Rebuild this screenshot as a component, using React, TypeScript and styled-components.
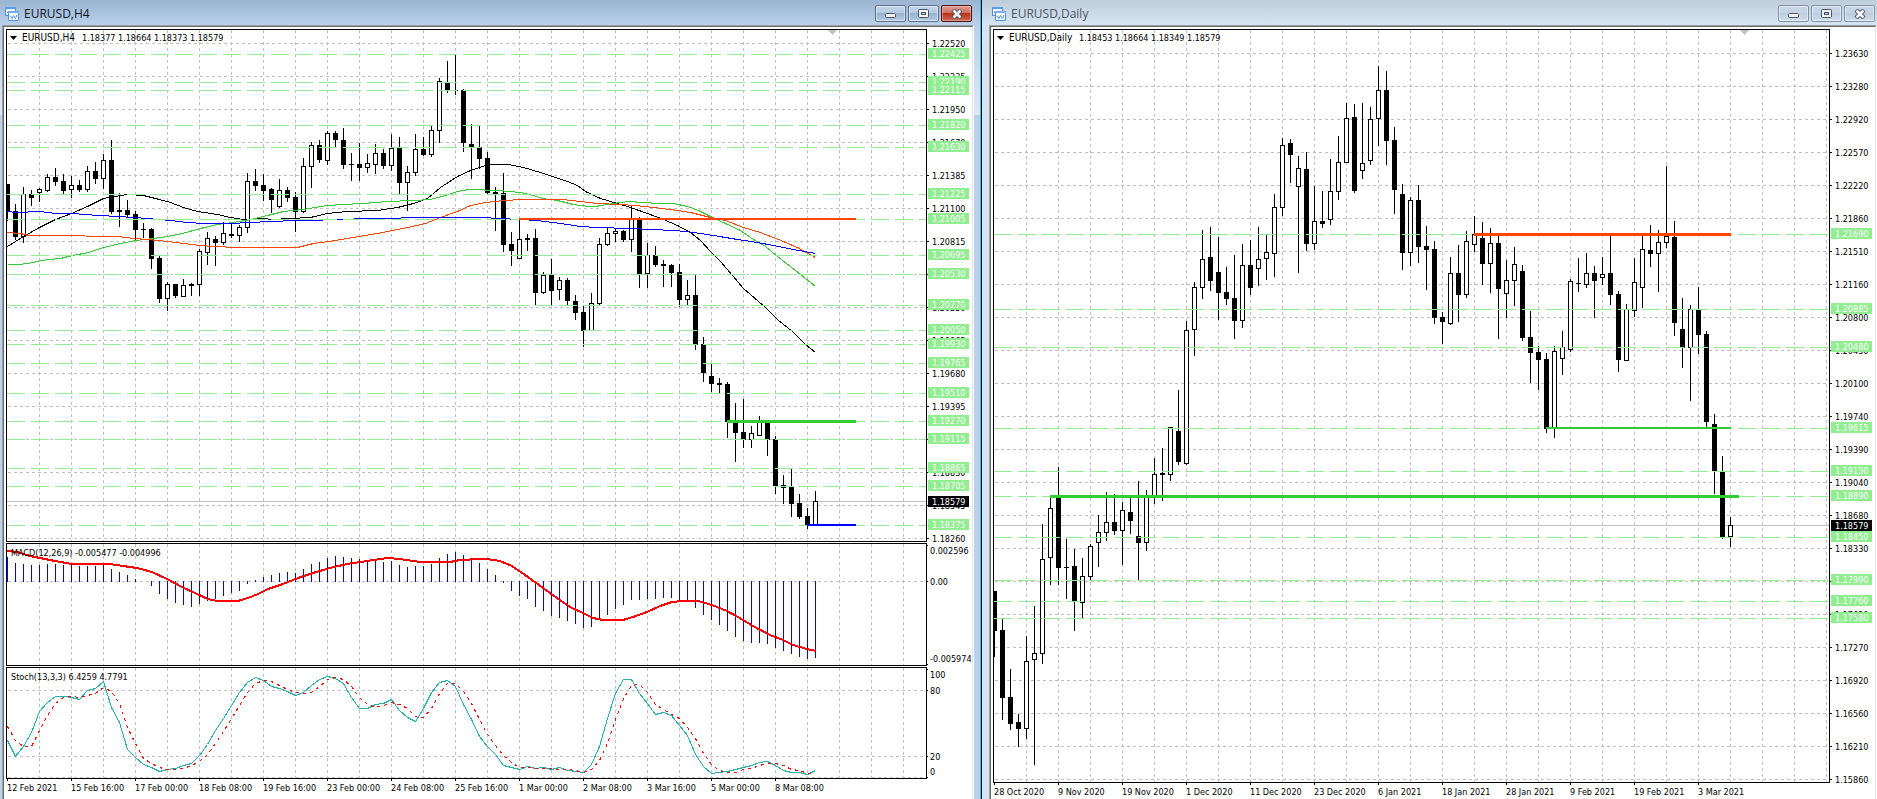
import React from "react";
import styled, { createGlobalStyle } from "styled-components";

const GlobalStyle = createGlobalStyle`
  * { box-sizing: border-box; }
  body { margin: 0; background: #ffffff; }
`;

const INK = "#000000";
const GRID = "#c0c0c0";
const LEVEL = "#90ee90";
const CHART_FONT = '"DejaVu Sans Condensed", "DejaVu Sans", sans-serif';
const BAR_STEP = 8;

/* ---------- window chrome ---------- */

const Workspace = styled.main`
  display: grid;
  grid-template-columns: minmax(0, 982fr) minmax(0, 895fr);
  min-height: 100vh;
`;

const ChartWindow = styled.section<{ $active: boolean }>`
  display: flex;
  flex-direction: column;
  min-width: 0;
  padding: ${(p) => (p.$active ? "0 7px 0 2px" : "0 0 0 7px")};
  background: ${(p) =>
    p.$active
      ? "linear-gradient(#b9d1ea 25px, #dde8f5 115px, #b9d1ea 115px)"
      : "#d7e4f2"};
  border-right: ${(p) => (p.$active ? "1px solid #000000" : "none")};
  box-shadow: ${(p) => (p.$active ? "inset -1px 0 0 #27c4f0" : "none")};
`;

const TitleBar = styled.header<{ $active: boolean }>`
  display: flex;
  align-items: center;
  gap: 5px;
  height: 25px;
  flex: none;
  margin: ${(p) => (p.$active ? "0 -6px 0 -2px" : "0 0 0 -7px")};
  padding: ${(p) => (p.$active ? "2px 8px 0 5px" : "2px 2px 0 10px")};
  background: ${(p) =>
    p.$active
      ? "linear-gradient(#9ab4d1, #b9d1ea)"
      : "linear-gradient(#bfcddb, #d7e4f2)"};
`;

const Title = styled.h1<{ $active: boolean }>`
  flex: 1;
  margin: 0;
  font: 400 12px/16px "Open Sans", "Noto Sans", sans-serif;
  color: ${(p) => (p.$active ? "#10161f" : "#4b5663")};
  white-space: nowrap;
`;

const Controls = styled.div`
  display: flex;
  gap: 2px;
`;

const faces = {
  active: "linear-gradient(#c4d6ea, #b3c9e0 47%, #98b3d0 50%, #b4cde6)",
  idle: "linear-gradient(#c9d7e6, #c3d2e2 50%, #bccddf 50%, #cfdeee)",
  close: "linear-gradient(#e0a095, #cf6f5d 47%, #b8331c 50%, #cf6a55)",
};

const ControlButton = styled.button<{ $face: keyof typeof faces }>`
  display: flex;
  align-items: center;
  justify-content: center;
  width: 31px;
  height: 17px;
  padding: 0;
  border: 1px solid ${(p) => (p.$face === "close" ? "#4c1310" : p.$face === "active" ? "#5b6f8f" : "#8291a8")};
  border-radius: 2px;
  background: ${(p) => faces[p.$face]};
  box-shadow: inset 0 0 0 1px ${(p) => (p.$face === "close" ? "rgba(255,200,190,.5)" : "rgba(255,255,255,.5)")};
`;

const Client = styled.div`
  flex: 1;
  border: 1px solid #a0a0a0;
  border-right-color: #ffffff;
  border-bottom: 0;
`;

const Canvas = styled.div`
  height: 100%;
  padding: 2px 0 0 2px;
  background: #ffffff;
  border: 1px solid #696969;
  border-right-color: #e3e3e3;
  border-bottom: 0;
`;

const Panes = styled.div`
  display: flex;
  flex-direction: column;
  gap: 1px;
`;

const PaneRow = styled.div`
  display: flex;
`;

const Plot = styled.div<{ $height: number }>`
  flex: 1;
  min-width: 0;
  height: ${(p) => p.$height}px;
  border: 1px solid #000000;
`;

const Drawing = styled.svg`
  display: block;
  width: 100%;
  height: 100%;
  overflow: hidden;
  font: 9px ${CHART_FONT};
  text-rendering: optimizeSpeed;
`;

const AxisDrawing = styled(Drawing)`
  overflow: visible;
`;

const Symbol = styled.text`
  font-size: 10px;
`;

const Axis = styled.div<{ $height: number }>`
  flex: none;
  width: 45px;
  height: ${(p) => p.$height}px;
`;

const TimeAxis = styled.div`
  display: flex;
  padding-left: 1px;
  font: 9px/14px ${CHART_FONT};
  color: #000000;
`;

const TimeMark = styled.span`
  flex: none;
  width: 64px;
  text-indent: -1px;
  white-space: nowrap;

  &::before {
    content: "";
    display: block;
    width: 1px;
    height: 2px;
    background: #000000;
  }
`;

/* ---------- icons ---------- */

const ChartIcon = () => (
  <svg width="14" height="14" viewBox="0 0 14 14" aria-hidden="true">
    <rect x="0.5" y="0.5" width="10" height="8" fill="#eef5fd" stroke="#4a8fe0" />
    <rect x="0" y="0" width="11" height="2" fill="#5c9be6" />
    <path d="M2 5.5h1l1-1.500v3l1-2h2" fill="none" stroke="#4a8fe0" />
    <rect x="3.500" y="4.500" width="10" height="9" rx="0.500" fill="#ffffff" stroke="#4a8fe0" />
    <rect x="3" y="4" width="11" height="2" fill="#79aeea" />
    <path d="M5 8.500l2 3 1.500-3 2 3 1.500-3.500" fill="none" stroke="#4a8fe0" />
  </svg>
);

const MinimizeIcon = () => (
  <svg width="11" height="9" viewBox="0 0 11 9" aria-hidden="true">
    <rect x="0.5" y="4.500" width="10" height="4" rx="1" fill="#f4f4f4" stroke="#4d5467" />
  </svg>
);

const MaximizeIcon = () => (
  <svg width="11" height="9" viewBox="0 0 11 9" aria-hidden="true">
    <rect x="0.5" y="0.5" width="10" height="8" rx="1" fill="#f4f4f4" stroke="#4d5467" />
    <rect x="3.500" y="3.500" width="4" height="2" fill="#b7c8dc" stroke="#4d5467" />
  </svg>
);

const CloseIcon = () => (
  <svg width="12" height="10" viewBox="0 0 12 10" aria-hidden="true">
    <path d="M2 1l8 8M10 1l-8 8" stroke="#4d5467" strokeWidth="4.500" />
    <path d="M2.500 1.500l7 7M9.500 1.500l-7 7" stroke="#f8f8f8" strokeWidth="2.500" />
  </svg>
);

/* ---------- chart data ---------- */

/* Each candle: direction, then high, body top, body bottom and low rows. */
const H4_CANDLES = `
b184 184 212 221,b204 211 237 240,w187 194 237 243,b190 194 198 206,w188 189 193 202,w174 177 191 192,b168 177 182 186,b174 181 191 194,
w176 185 190 198,b180 185 190 192,w166 171 190 192,b162 171 179 184,w154 160 179 189,b140 160 212 214,b193 210 212 227,b200 210 215 218,
b211 214 230 240,b223 229 230 238,b228 229 259 269,b256 258 299 303,w282 284 299 311,b284 284 296 298,w279 285 297 297,b283 284 286 296,
w249 251 285 296,w232 238 253 265,b236 239 243 266,w222 233 243 245,b223 234 236 238,w225 227 236 242,w173 181 228 233,b169 181 186 191,
b174 185 191 201,b188 189 200 213,w179 190 207 208,b187 190 198 202,b192 197 212 232,w158 166 212 213,w142 145 167 188,b140 145 160 163,
w131 133 161 165,b131 133 140 147,b128 140 165 169,b153 164 165 181,b143 164 168 181,w154 163 168 173,w144 153 165 174,b149 153 166 169,
w134 148 166 171,b137 148 183 194,w166 172 183 211,w134 149 173 176,b137 149 155 156,w126 130 155 157,w78 81 131 143,b61 83 90 93,
b54 90 91 95,b89 90 143 152,b124 144 147 179,b126 147 159 169,b152 158 193 194,b187 192 194 231,b173 193 245 252,b232 244 251 266,
w219 239 259 259,b234 238 240 251,b229 238 293 305,w272 275 293 294,b259 275 291 305,w277 280 290 300,b278 280 301 305,b295 301 313 320,
b306 312 331 347,w293 303 331 331,w238 244 304 305,w228 233 245 246,w228 231 234 242,b230 231 240 242,w205 219 240 252,b217 218 274 288,
w243 255 274 288,b246 255 265 267,b260 264 266 287,b264 265 273 287,b264 272 300 307,w280 295 300 305,b274 295 345 350,b337 344 373 382,
b364 376 384 392,b378 383 385 393,b382 384 422 438,b403 422 433 462,b399 432 440 448,w426 433 440 448,w416 422 436 436,b422 422 440 456,
b436 439 486 494,b475 485 488 504,b469 487 504 517,b494 503 517 519,b508 516 525 529,w491 501 526 526`;

const DAILY_CANDLES = `
b591 591 631 657,b619 630 698 720,b669 697 724 730,b714 722 729 747,w636 661 729 739,w606 653 660 765,w524 559 654 664,w496 508 558 585,
b467 497 568 585,b539 567 568 599,b549 566 602 631,w558 576 603 618,w544 546 577 580,w515 532 543 567,w492 522 533 541,b494 522 531 535,
w502 510 531 565,b497 512 521 534,b481 536 543 580,w490 497 543 551,w458 474 497 504,b448 473 475 501,w427 427 475 481,b390 431 462 465,
w321 330 464 465,w282 287 330 356,w230 259 288 299,b227 257 281 291,b237 272 293 320,b267 292 299 305,b255 298 321 339,w244 265 321 328,
b240 265 288 295,w227 259 269 286,w234 252 259 280,w194 207 254 277,w138 145 208 216,b139 143 155 183,w156 168 187 273,b152 169 244 251,
w186 221 244 250,b191 221 224 228,w159 191 220 225,w136 162 192 200,w103 118 163 163,b104 117 191 193,w103 163 171 179,w107 119 161 165,
w66 90 119 146,b71 90 141 165,b127 140 190 214,b184 194 253 270,w197 200 253 266,b185 200 247 263,b226 246 250 290,b241 249 318 324,
b312 317 322 344,w257 273 324 325,b245 273 295 322,w231 241 295 298,w216 234 245 252,b222 238 264 285,w228 243 264 293,b236 243 289 339,
w260 280 294 318,w247 264 281 306,b265 271 338 341,b311 337 353 383,b346 352 360 390,b353 359 429 433,w346 351 428 438,w331 347 359 375,
w279 281 350 352,b258 283 284 292,w253 273 285 288,b266 273 281 318,w257 274 278 285,b235 273 295 305,b291 294 360 372,w304 309 361 361,
w258 282 311 317,w235 249 288 308,b225 250 254 267,w230 242 254 292,w166 236 243 248,b221 237 323 336,b298 329 348 368,w305 309 348 401,
b287 309 335 354,b331 334 422 427,b414 424 471 494,b456 471 537 539,w517 525 537 547`;

const AVERAGES: { color: string; points: string }[] = [
  {
    color: INK,
    points:
      "7,246 23,236 39,227 55,219 71,213 87,206 103,198 115,196 127,194 143,195 159,199 170,202 183,207 197,211 217,214 230,217 243,219 263,218 272,219 290,218 310,217 327,213 347,211 377,210 397,207 413,203 427,198 440,187 457,176 470,170 485,165 495,164 508,164 523,167 540,172 552,176 567,181 577,185 585,191 600,198 617,203 630,207 647,213 663,219 677,225 690,232 700,240 710,251 720,261 732,275 743,288 765,307 778,320 792,331 805,344 815,352",
  },
  {
    color: "#32cd32",
    points:
      "7,264 19,264 33,262 40,260 60,258 72,255 88,252 103,247 120,243 135,240 153,238 167,236 182,233 200,228 217,224 233,222 250,219 267,215 283,211 303,209 327,205 343,204 363,203 387,201 413,200 430,199 445,195 457,191 468,189 498,190 520,192 533,195 542,198 557,200 573,204 588,206 595,206 613,203 628,201 642,202 658,203 673,203 687,206 698,210 708,215 725,223 740,230 753,239 765,246 777,256 795,270 815,286",
  },
  {
    color: "#ff4500",
    points:
      "7,232 20,233 28,235 52,235 117,236 133,238 147,239 167,241 183,243 200,245 213,246 237,247 297,247 313,243 328,241 347,238 377,233 407,227 425,223 440,217 457,211 470,205 485,202 503,200 523,199 562,199 580,201 597,203 620,204 635,205 653,207 670,209 690,212 710,217 725,220 743,227 760,232 778,239 797,247 815,257",
  },
  {
    color: "#0000ff",
    points:
      "7,211 15,212 40,211 55,213 73,213 83,214 117,216 133,217 147,218 170,220 187,222 203,223 233,223 247,222 273,221 293,220 322,220 323,219 353,219 355,218 400,218 401,217 480,217 500,218 537,220 560,223 580,226 597,227 630,228 650,229 675,230 693,232 713,235 737,239 757,242 773,245 793,249 815,253",
  },
];

const MACD_BARS = [
  557, 563, 564, 565, 565, 564, 564, 565, 565, 566, 566, 566, 565, 569, 572, 575, 579, 581, 586, 594, 599, 603, 605, 607, 604, 601,
  599, 596, 593, 591, 584, 580, 577, 575, 573, 572, 573, 569, 564, 562, 558, 556, 557, 558, 559, 561, 560, 562, 561, 565, 567, 566,
  566, 564, 558, 554, 552, 555, 560, 563, 569, 575, 583, 591, 596, 599, 607, 611, 616, 618, 621, 624, 628, 627, 619, 615, 609, 605,
  600, 600, 599, 599, 598, 598, 600, 600, 608, 615, 620, 625, 631, 637, 641, 643, 643, 644, 648, 651, 654, 657, 659, 658,
];

const MACD_SIGNAL =
  "7,551 17,552 30,556 40,558 55,561 72,564 110,564 123,566 137,568 152,572 167,579 182,587 197,594 208,599 217,601 238,601 248,598 258,594 268,589 283,584 298,578 313,573 330,568 347,564 367,561 387,558 400,559 420,562 450,562 460,560 480,559 487,559 500,561 512,566 528,577 543,588 557,598 570,607 583,613 593,618 603,620 623,620 633,617 647,612 660,606 672,602 683,601 698,601 712,605 727,611 738,617 753,626 770,635 783,640 793,645 807,649 816,651";

const STOCH_MAIN = [
  740, 756, 746, 732, 711, 702, 696, 696, 697, 699, 690, 688, 681, 707, 722, 749, 757, 764, 767, 771, 769, 768, 765, 763, 755, 744,
  730, 718, 705, 692, 682, 677, 680, 686, 688, 691, 695, 692, 685, 679, 676, 678, 683, 697, 708, 708, 704, 703, 699, 710, 717, 721,
  708, 692, 682, 680, 686, 704, 719, 736, 746, 754, 765, 767, 769, 766, 768, 767, 769, 767, 770, 771, 772, 764, 746, 718, 693, 679,
  679, 693, 703, 714, 712, 715, 725, 735, 754, 766, 773, 772, 771, 769, 767, 765, 762, 761, 765, 770, 772, 772, 774, 770,
];

const STOCH_SIGNAL = [
  726, 740, 746, 746, 730, 715, 703, 697, 696, 697, 695, 693, 687, 691, 703, 727, 743, 758, 763, 767, 769, 769, 768, 765, 761, 754,
  743, 731, 718, 705, 692, 683, 680, 681, 685, 689, 692, 693, 692, 686, 679, 677, 679, 686, 697, 704, 707, 705, 702, 704, 708, 716,
  717, 708, 693, 683, 683, 691, 703, 719, 734, 745, 755, 762, 767, 767, 768, 768, 768, 769, 769, 770, 772, 769, 760, 743, 719, 698,
  685, 684, 692, 704, 709, 714, 718, 727, 738, 753, 764, 770, 772, 772, 769, 768, 765, 763, 763, 765, 769, 770, 773, 772,
];

type Mark = { y: number; text: string };

const marks = (src: string): Mark[] =>
  src.trim().split(/\s+/).map((m) => {
    const [y, text] = m.split(":");
    return { y: Number(y), text };
  });

/* Axis steps are 33 rows apart; "-" leaves a step without a caption. */
const scale = (first: number, prices: string): Mark[] =>
  prices.trim().split(/\s+/).map((text, i) => ({ y: first + 33 * i, text: text === "-" ? "" : text }));

const H4_SCALE = scale(
  43,
  "1.22520 1.22235 1.21950 1.21670 1.21385 1.21100 1.20815 - 1.20250 1.19965 1.19680 1.19395 - 1.18830 1.18545 1.18260",
);
const DAILY_SCALE = scale(
  53,
  "1.23630 1.23280 1.22920 1.22570 1.22220 1.21860 1.21510 1.21160 1.20800 1.20450 1.20100 1.19740 1.19390 1.19040 1.18680 1.18330 - 1.17620 1.17270 1.16920 1.16560 1.16210 1.15860",
);
const H4_LEVELS = marks(
  "54:1.22425 82:1.22190 90:1.22115 125:1.21820 147:1.21630 194:1.21225 219:1.21005 255:1.20695 274:1.20530 305:1.20270 330:1.20050 344:1.19930 363:1.19765 393:1.19510 421:1.19270 439:1.19115 468:1.18865 486:1.18705 525:1.18375",
);
const DAILY_LEVELS = marks(
  "234:1.21690 309:1.20885 347:1.20480 428:1.19615 471:1.19150 496:1.18890 537:1.18450 580:1.17990 601:1.17760 618:1.17580",
);

const H4_DATES = [
  "12 Feb 2021", "15 Feb 16:00", "17 Feb 00:00", "18 Feb 08:00", "19 Feb 16:00", "23 Feb 00:00", "24 Feb 08:00",
  "25 Feb 16:00", "1 Mar 00:00", "2 Mar 08:00", "3 Mar 16:00", "5 Mar 00:00", "8 Mar 08:00",
];
const DAILY_DATES = [
  "28 Oct 2020", "9 Nov 2020", "19 Nov 2020", "1 Dec 2020", "11 Dec 2020", "23 Dec 2020", "6 Jan 2021",
  "18 Jan 2021", "28 Jan 2021", "9 Feb 2021", "19 Feb 2021", "3 Mar 2021",
];

/* ---------- chart drawing ---------- */

const Grid = ({ rows, top }: { rows: number[]; top: number }) => (
  <g stroke={GRID} strokeDasharray="3 3" shapeRendering="crispEdges">
    {Array.from({ length: 60 }, (_, i) => (
      <line key={i} x1={32 * (i + 1) + 0.5} x2={32 * (i + 1) + 0.5} y1={top} y2={top + 1000} />
    ))}
    {rows.map((y) => (
      <line key={y} x1="1" x2="100%" y1={y + 0.5} y2={y + 0.5} />
    ))}
  </g>
);

const Candles = ({ source }: { source: string }) => (
  <g shapeRendering="crispEdges">
    {source.trim().split(/,\s*/).map((entry, i) => {
      const hollow = entry[0] === "w";
      const [high, top, bottom, low] = entry.slice(1).split(" ").map(Number);
      const x = i * BAR_STEP;
      return (
        <g key={i}>
          <rect x={x} y={high} width="1" height={low - high} fill={INK} />
          <rect x={x - 2} y={top} width="5" height={bottom - top} fill={INK} />
          {hollow && <rect x={x - 1} y={top + 1} width="3" height={Math.max(bottom - top - 2, 1)} fill="#ffffff" />}
        </g>
      );
    })}
  </g>
);

const Levels = ({ items }: { items: Mark[] }) => (
  <g stroke={LEVEL} strokeDasharray="18 6" shapeRendering="crispEdges">
    {items.map(({ y }) => (
      <line key={y} x1="0" x2="100%" y1={y + 0.5} y2={y + 0.5} />
    ))}
  </g>
);

const PriceAxis = ({ height, top, ticks, levels, current }: {
  height: number; top: number; ticks: Mark[]; levels: Mark[]; current: Mark;
}) => (
  <Axis $height={height}>
    <AxisDrawing>
      <g transform={`translate(0 ${-top})`}>
        {ticks.map(({ y, text }) => (
          <g key={y}>
            <rect x="0" y={y} width="2" height="1" />
            {text && <text x="5" y={y + 4}>{text}</text>}
          </g>
        ))}
        {levels.map(({ y, text }) => (
          <g key={y}>
            <rect x="1" y={y - 6} width="41" height="11" fill={LEVEL} />
            <text x="5" y={y + 3} fill="#ffffff">{text}</text>
          </g>
        ))}
        <rect x="1" y={current.y - 5} width="41" height="11" />
        <text x="5" y={current.y + 4} fill="#ffffff">{current.text}</text>
      </g>
    </AxisDrawing>
  </Axis>
);

const IndicatorAxis = ({ height, top, ticks, labels }: {
  height: number; top: number; ticks: number[]; labels: Mark[];
}) => (
  <Axis $height={height}>
    <AxisDrawing>
      <g transform={`translate(0 ${-top})`}>
        {ticks.map((y) => <rect key={y} x="0" y={y} width="1" height="1" />)}
        {labels.map(({ y, text }) => <text key={y} x="3" y={y}>{text}</text>)}
      </g>
    </AxisDrawing>
  </Axis>
);

const QuoteLine = ({ symbol, start, quotes }: { symbol: string; start: number; quotes: string[] }) => (
  <g>
    <path d="M3 36h7l-3.500 4z" />
    <Symbol x="15" y="41">{symbol}</Symbol>
    {quotes.map((q, i) => <text key={q} x={start + 36 * i} y="41">{q}</text>)}
  </g>
);

const seriesPoints = (rows: number[]) => rows.map((y, i) => `${i * BAR_STEP},${y}`).join(" ");

const WindowBar = ({ title, active }: { title: string; active: boolean }) => (
  <TitleBar $active={active}>
    <ChartIcon />
    <Title $active={active}>{title}</Title>
    <Controls>
      <ControlButton $face={active ? "active" : "idle"} aria-label="Minimize"><MinimizeIcon /></ControlButton>
      <ControlButton $face={active ? "active" : "idle"} aria-label="Maximize"><MaximizeIcon /></ControlButton>
      <ControlButton $face={active ? "close" : "idle"} aria-label="Close"><CloseIcon /></ControlButton>
    </Controls>
  </TitleBar>
);

const Dates = ({ labels }: { labels: string[] }) => (
  <TimeAxis>
    {labels.map((d) => <TimeMark key={d}>{d}</TimeMark>)}
  </TimeAxis>
);

const H4Window = () => (
  <ChartWindow $active>
    <WindowBar title="EURUSD,H4" active />
    <Client>
      <Canvas>
        <Panes>
          <PaneRow>
            <Plot $height={513}>
              <Drawing role="img" aria-label="EURUSD four hour candles">
                <g transform="translate(0 -30)">
                  <Grid rows={H4_SCALE.map((m) => m.y)} top={30} />
                  <rect x="0" y="501" width="100%" height="1" fill={GRID} />
                  <Candles source={H4_CANDLES} />
                  <g transform="translate(-6.5 0.5)" fill="none" shapeRendering="crispEdges">
                    {AVERAGES.map((a) => <polyline key={a.color} points={a.points} stroke={a.color} />)}
                  </g>
                  <Levels items={H4_LEVELS} />
                  <g transform="translate(-7 0)">
                    <rect x="519" y="218" width="337" height="2" fill="#ff4500" />
                    <rect x="727" y="420" width="129" height="3" fill="#32cd32" />
                    <rect x="807" y="524" width="49" height="2" fill="#0000ff" />
                    <path d="M828 30h9l-4.500 5z" fill={GRID} />
                  </g>
                  <QuoteLine symbol="EURUSD,H4" start={75} quotes={["1.18377", "1.18664", "1.18373", "1.18579"]} />
                </g>
              </Drawing>
            </Plot>
            <PriceAxis height={513} top={29} ticks={H4_SCALE} levels={H4_LEVELS} current={{ y: 501, text: "1.18579" }} />
          </PaneRow>
          <PaneRow>
            <Plot $height={123}>
              <Drawing role="img" aria-label="MACD">
                <g transform="translate(0 -544)">
                  <Grid rows={[581]} top={544} />
                  <g fill="#0000ff">
                    {MACD_BARS.map((y, i) => (
                      <rect key={i} x={i * BAR_STEP} y={Math.min(y, 581)} width="1" height={Math.abs(y - 581) + (y < 581 ? 1 : 0)} />
                    ))}
                  </g>
                  <polyline transform="translate(-7 0)" points={MACD_SIGNAL} fill="none" stroke="#ff0000" strokeWidth="2" shapeRendering="crispEdges" />
                  <text x="4" y="556">MACD(12,26,9) -0.005477 -0.004996</text>
                </g>
              </Drawing>
            </Plot>
            <IndicatorAxis
              height={123} top={543} ticks={[545, 581, 664]}
              labels={marks("554:0.002596 585:0.00 662:-0.005974")}
            />
          </PaneRow>
          <PaneRow>
            <Plot $height={112}>
              <Drawing role="img" aria-label="Stochastic oscillator">
                <g transform="translate(0 -668)">
                  <Grid rows={[690, 756, 777]} top={668} />
                  <g transform="translate(0.5 0.5)" fill="none" shapeRendering="crispEdges">
                    <polyline points={seriesPoints(STOCH_MAIN)} stroke="#20b2aa" />
                    <polyline points={seriesPoints(STOCH_SIGNAL)} stroke="#ff0000" strokeDasharray="3 4" />
                  </g>
                  <text x="4" y="680">Stoch(13,3,3) 6.4259 4.7791</text>
                </g>
              </Drawing>
            </Plot>
            <IndicatorAxis
              height={112} top={667} ticks={[669, 690, 756, 777]}
              labels={marks("678:100 694:80 760:20 775:0")}
            />
          </PaneRow>
        </Panes>
        <Dates labels={H4_DATES} />
      </Canvas>
    </Client>
  </ChartWindow>
);

const DailyWindow = () => (
  <ChartWindow $active={false}>
    <WindowBar title="EURUSD,Daily" active={false} />
    <Client>
      <Canvas>
        <PaneRow>
          <Plot $height={754}>
            <Drawing role="img" aria-label="EURUSD daily candles">
              <g transform="translate(0 -30)">
                <Grid rows={DAILY_SCALE.map((m) => m.y)} top={30} />
                <rect x="0" y="525" width="100%" height="1" fill={GRID} />
                <Candles source={DAILY_CANDLES} />
                <Levels items={DAILY_LEVELS} />
                <g transform="translate(-994 0)">
                  <rect x="1474" y="233" width="257" height="3" fill="#ff4500" />
                  <rect x="1546" y="427" width="185" height="2" fill="#32cd32" />
                  <rect x="1050" y="495" width="689" height="3" fill="#32cd32" />
                  <path d="M1740 30h9l-4.500 5z" fill={GRID} />
                </g>
                <QuoteLine symbol="EURUSD,Daily" start={85} quotes={["1.18453", "1.18664", "1.18349", "1.18579"]} />
              </g>
            </Drawing>
          </Plot>
          <PriceAxis height={754} top={29} ticks={DAILY_SCALE} levels={DAILY_LEVELS} current={{ y: 525, text: "1.18579" }} />
        </PaneRow>
        <Dates labels={DAILY_DATES} />
      </Canvas>
    </Client>
  </ChartWindow>
);

export default function App() {
  return (
    <>
      <GlobalStyle />
      <Workspace>
        <H4Window />
        <DailyWindow />
      </Workspace>
    </>
  );
}
